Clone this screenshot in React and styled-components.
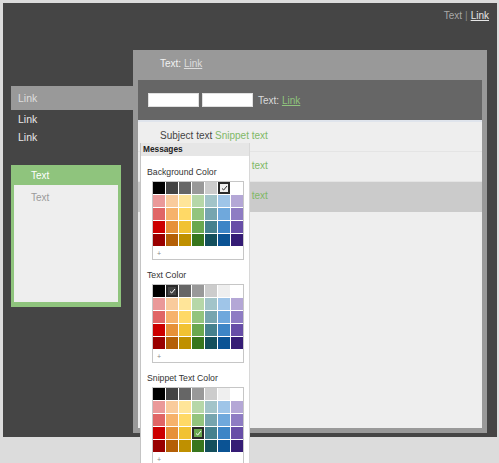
import React from 'react'
import styled, { createGlobalStyle } from 'styled-components'

const Global = createGlobalStyle`
    html, body {
        margin: 0;
        padding: 0;
        background: #dcdcdc;
        overflow: hidden;
    }
    body {
        font-family: "Liberation Sans", Arial, sans-serif;
        font-size: 10px;
    }
`

const Page = styled.div`
    position: relative;
    width: 499px;
    height: 463px;
    padding: 3px 2px 0 3px;
    box-sizing: border-box;
`

const Frame = styled.div`
    width: 494px;
    height: 434px;
    background: #454545;
    display: flex;
    flex-direction: column;
`

const TopBar = styled.div`
    height: 47px;
    display: flex;
    justify-content: flex-end;
    align-items: flex-start;
    padding: 7px 8px 0 0;
    box-sizing: border-box;
    line-height: 12px;
    color: #a8a8a8;
`

const Sep = styled.span`
    margin: 0 3px;
    color: #8a8a8a;
`

const TopLink = styled.span`
    color: #e6e6e6;
    text-decoration: underline;
`

const Body = styled.div`
    flex: 1;
    display: flex;
    padding: 0 10px 4px 0;
    min-height: 0;
`

const Sidebar = styled.div`
    width: 130px;
    padding-left: 8px;
    box-sizing: border-box;
    display: flex;
    flex-direction: column;
`

const NavItem = styled.div`
    height: ${p => (p.$active ? '24px' : '18px')};
    line-height: ${p => (p.$active ? '24px' : '18px')};
    padding-left: 7px;
    margin-top: ${p => (p.$active ? '36px' : '0')};
    font-size: 10.5px;
    background: ${p => (p.$active ? '#999' : 'transparent')};
    color: ${p => (p.$active ? '#dedede' : '#e8e8e8')};
`

const GreenBox = styled.div`
    width: 110px;
    height: 142px;
    margin-top: 19px;
    background: #8fc47d;
    padding: 0 3px 5px;
    box-sizing: border-box;
    display: flex;
    flex-direction: column;
`

const GreenHead = styled.div`
    height: 20px;
    line-height: 22px;
    padding-left: 17px;
    color: #fff;
`

const GreenBody = styled.div`
    flex: 1;
    background: #eee;
    padding: 7px 0 0 17px;
    line-height: 12px;
    color: #9a9a9a;
`

const Panel = styled.div`
    flex: 1;
    background: #999;
    display: flex;
    flex-direction: column;
    padding: 0 5px 5px;
`

const PanelHead = styled.div`
    height: 30px;
    line-height: 28px;
    padding-left: 22px;
    color: #f2f2f2;
`

const Underlined = styled.span`
    color: ${p => p.$color || '#ddd'};
    text-decoration: underline;
`

const Inner = styled.div`
    flex: 1;
    background: #eee;
    display: flex;
    flex-direction: column;
`

const Toolbar = styled.div`
    height: 40px;
    background: #666;
    display: flex;
    align-items: center;
    gap: 3px;
    padding-left: 10px;
`

const Field = styled.div`
    width: 51px;
    height: 14px;
    background: #fff;
    border: 1px solid #e0e0e0;
    box-sizing: border-box;
`

const ToolText = styled.span`
    margin-left: 2px;
    color: #dadada;
`

const List = styled.div`
    border-top: 2px solid #dfe4ec;
`

const Row = styled.div`
    height: 30px;
    line-height: 28px;
    padding-left: 22px;
    color: #444;
    background: ${p => (p.$selected ? '#cbcbcb' : 'transparent')};
    border-bottom: 1px solid ${p => (p.$selected ? '#cbcbcb' : '#e4e4e4')};
    box-sizing: border-box;
`

const Snippet = styled.span`
    color: #7fb866;
`

const Popup = styled.div`
    position: absolute;
    left: 140px;
    top: 143px;
    width: 110px;
    height: 330px;
    background: #fff;
    border-left: 1px solid #c4c4c4;
    border-right: 1px solid #d8d8d8;
    box-sizing: border-box;
`

const PopupHead = styled.div`
    height: 13px;
    line-height: 13px;
    background: #e6e6e6;
    padding-left: 2px;
    font-size: 8.3px;
    font-weight: bold;
    color: #222;
`

const Section = styled.div`
    padding: ${p => (p.$first ? '9px' : '8px')} 0 0 6px;
`

const Label = styled.div`
    height: 14px;
    line-height: 14px;
    font-size: 8.7px;
    color: #333;
`

const Grid = styled.div`
    margin: 2px 0 0 5px;
    width: 92px;
    display: grid;
    grid-template-columns: repeat(7, 12px);
    grid-auto-rows: 12px;
    gap: 1px;
    border: 1px solid #c6c6c6;
    box-sizing: border-box;
    background: #fff;
`

const Swatch = styled.div`
    background: ${p => p.$color};
    box-sizing: border-box;
    border: ${p => (p.$selected ? '2px solid #2a2a2a' : 'none')};
    display: flex;
    align-items: center;
    justify-content: center;
`

const Plus = styled.div`
    grid-column: 1 / -1;
    height: 13px;
    line-height: 13px;
    padding-left: 4px;
    font-size: 7px;
    color: #888;
`

const palette = [
    ['#000000', '#434343', '#666666', '#999999', '#cccccc', '#efefef', '#ffffff'],
    ['#ea9999', '#f9cb9c', '#ffe599', '#b6d7a8', '#a2c4c9', '#9fc5e8', '#b4a7d6'],
    ['#e06666', '#f6b26b', '#ffd966', '#93c47d', '#76a5af', '#6fa8dc', '#8e7cc3'],
    ['#cc0000', '#e69138', '#f1c232', '#6aa84f', '#45818e', '#3d85c6', '#674ea7'],
    ['#990000', '#b45f06', '#bf9000', '#38761d', '#134f5c', '#0b5394', '#351c75'],
]

const Check = ({ color }) => (
    <svg width="7" height="6" viewBox="0 0 7 6">
        <path d="M1 3.5 L2.7 5 L6 1" fill="none" stroke={color} strokeWidth="1" />
    </svg>
)

const ColorPicker = ({ selRow, selCol, checkColor }) => (
    <Grid>
        {palette.map((row, r) =>
            row.map((c, i) => {
                const sel = r === selRow && i === selCol
                return (
                    <Swatch key={r + '-' + i} $color={c} $selected={sel}>
                        {sel && <Check color={checkColor} />}
                    </Swatch>
                )
            })
        )}
        <Plus>+</Plus>
    </Grid>
)

const rows = [false, false, true]

const App = () => {
    return (
        <Page>
            <Global />
            <Frame>
                <TopBar>
                    Text<Sep>|</Sep><TopLink>Link</TopLink>
                </TopBar>
                <Body>
                    <Sidebar>
                        <NavItem $active>Link</NavItem>
                        <NavItem>Link</NavItem>
                        <NavItem>Link</NavItem>
                        <GreenBox>
                            <GreenHead>Text</GreenHead>
                            <GreenBody>Text</GreenBody>
                        </GreenBox>
                    </Sidebar>
                    <Panel>
                        <PanelHead>
                            Text: <Underlined>Link</Underlined>
                        </PanelHead>
                        <Inner>
                            <Toolbar>
                                <Field />
                                <Field />
                                <ToolText>
                                    Text: <Underlined $color="#8fc47d">Link</Underlined>
                                </ToolText>
                            </Toolbar>
                            <List>
                                {rows.map((sel, i) => (
                                    <Row key={i} $selected={sel}>
                                        Subject text <Snippet>Snippet text</Snippet>
                                    </Row>
                                ))}
                            </List>
                        </Inner>
                    </Panel>
                </Body>
            </Frame>
            <Popup>
                <PopupHead>Messages</PopupHead>
                <Section $first>
                    <Label>Background Color</Label>
                    <ColorPicker selRow={0} selCol={5} checkColor="#333" />
                </Section>
                <Section>
                    <Label>Text Color</Label>
                    <ColorPicker selRow={0} selCol={1} checkColor="#fff" />
                </Section>
                <Section>
                    <Label>Snippet Text Color</Label>
                    <ColorPicker selRow={3} selCol={3} checkColor="#fff" />
                </Section>
            </Popup>
        </Page>
    )
}

export default App
